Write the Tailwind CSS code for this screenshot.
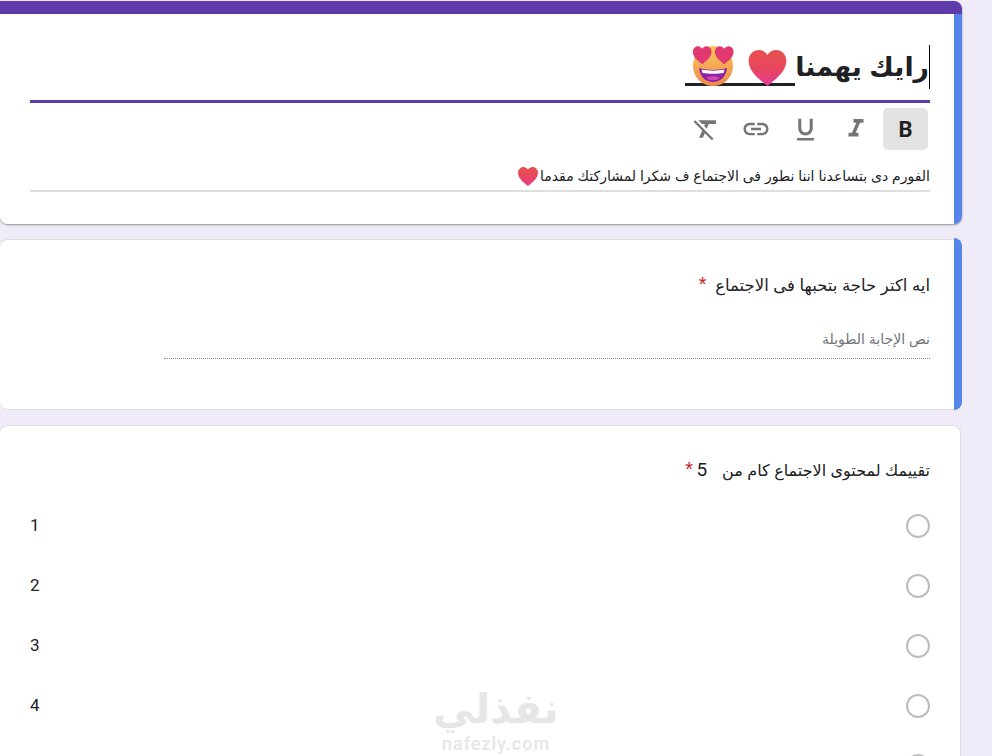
<!DOCTYPE html>
<html lang="ar">

<head>
    <meta charset="UTF-8">
    <meta name="viewport" content="width=device-width, initial-scale=1.0">
    <title>Form</title>
    <script src="https://cdn.jsdelivr.net/npm/@tailwindcss/browser@4"></script>
</head>

<body class="bg-[#f0ebf8] h-[756px] overflow-hidden relative font-['Liberation_Sans','DejaVu_Sans',sans-serif] text-[#202124]">
    <svg class="absolute w-0 h-0">
        <defs>
            <linearGradient id="heartFill" x1="0" y1="0" x2="0" y2="1">
                <stop offset="0" stop-color="#e8504c" />
                <stop offset="0.55" stop-color="#e64560" />
                <stop offset="1" stop-color="#e63c98" />
            </linearGradient>
            <linearGradient id="faceFill" x1="0" y1="0" x2="0" y2="1">
                <stop offset="0" stop-color="#fbc75a" />
                <stop offset="1" stop-color="#ee8a4e" />
            </linearGradient>
            <path id="heartShape" d="M12 22.500C5 17 1 13 1 7.800 1 4.200 3.700 1.500 7 1.500c2 0 3.900 1 5 2.900 1.100-1.900 3-2.900 5-2.900 3.300 0 6 2.700 6 6.300 0 5.200-4 9.200-11 14.700z" />
        </defs>
    </svg>
    <main class="w-[962px] pt-px flex flex-col gap-[14px]">
        <!-- Title card -->
        <section class="h-[223px] flex flex-col rounded-b-lg rounded-tr-lg shadow-[0_1px_2px_rgba(0,0,0,0.4)] overflow-hidden">
            <div class="h-[13px] bg-[#5f3aab] shrink-0"></div>
            <div class="flex flex-1">
                <div class="flex-1 bg-white pl-[30px] pr-6" dir="rtl">
                    <div class="h-[89px] w-[900px] flex items-end border-b-[3px] border-[#5f3aab] pb-[11px]">
                        <div class="h-[44px] border-r border-black flex items-end pb-[3px]">
                            <span class="text-[26.8px] leading-[38px] font-bold text-[#202124] whitespace-nowrap">رايك يهمنا</span>
                            <span class="flex items-end h-[40px] w-[110px] border-b-[3px] border-[#202124]">
                                <svg class="w-[39px] h-[36px] shrink-0 mr-[8px] mb-[-3px]" viewBox="1 1.500 22 21"><use href="#heartShape" fill="url(#heartFill)" /></svg>
                                <svg class="w-[42px] h-[42px] shrink-0 mr-[14px] mb-[-4px]" viewBox="0 0 42 42">
                                    <circle cx="21" cy="21" r="20" fill="url(#faceFill)" />
                                    <path d="M7 23c9 2.500 19 2.500 28 0-1 9-7 14-14 14S8 32 7 23z" fill="#8f1fa3" />
                                    <path d="M9.500 24.500c7 1.500 16 1.500 23 0l-1 3.500c-6 1-15 1-21 0z" fill="#fff" />
                                    <path d="M14 33c4-2.500 10-2.500 14 0-4 3-10 3-14 0z" fill="#d548b4" />
                                    <g transform="translate(0 0) scale(0.85)"><use href="#heartShape" fill="#e0386f" /></g>
                                    <g transform="translate(22 0) scale(0.85)"><use href="#heartShape" fill="#e0386f" /></g>
                                </svg>
                            </span>
                        </div>
                    </div>
                    <div class="flex gap-[5px] h-[42px] mt-[5px] w-[900px] pr-[2px]">
                        <div class="w-[45px] h-[42px] bg-[#e3e3e3] rounded-[5px] flex items-center justify-center font-['Roboto',sans-serif] font-bold text-[22px] text-[#202124]">B</div>
                        <div class="w-[45px] flex items-center justify-center">
                            <svg class="w-[30px] h-[30px] fill-[#757575]" viewBox="0 0 24 24"><path d="M10 4v3h2.210l-3.420 8H6v3h8v-3h-2.210l3.420-8H18V4z" /></svg>
                        </div>
                        <div class="w-[45px] flex items-center justify-center">
                            <svg class="w-[29px] h-[29px] fill-[#757575]" viewBox="0 0 24 24"><path d="M12 17c3.310 0 6-2.690 6-6V3h-2.500v8c0 1.930-1.570 3.500-3.500 3.500S8.500 12.930 8.500 11V3H6v8c0 3.310 2.690 6 6 6zm-7 2v2h14v-2H5z" /></svg>
                        </div>
                        <div class="w-[45px] flex items-center justify-center">
                            <svg class="w-[30px] h-[30px] fill-[#757575]" viewBox="0 0 24 24"><path d="M3.900 12c0-1.710 1.390-3.100 3.100-3.100h4V7H7c-2.760 0-5 2.240-5 5s2.240 5 5 5h4v-1.900H7c-1.710 0-3.100-1.390-3.100-3.100zM8 13h8v-2H8v2zm9-6h-4v1.900h4c1.710 0 3.100 1.390 3.100 3.100s-1.390 3.100-3.100 3.100h-4V17h4c2.760 0 5-2.240 5-5s-2.240-5-5-5z" /></svg>
                        </div>
                        <div class="w-[45px] flex items-center justify-center">
                            <svg class="w-[30px] h-[30px] fill-[#757575]" viewBox="0 0 24 24"><path d="M3.270 5L2 6.270l6.970 6.970L6.500 19h3l1.570-3.660L16.730 21 18 19.730 3.550 5.270 3.270 5zM6 5v.180L8.820 8h2.400l-.720 1.680 2.100 2.100L14.210 8H20V5H6z" /></svg>
                        </div>
                    </div>
                    <div class="w-[900px] h-[30px] mt-[12px] border-b-2 border-[#dedede] flex items-center text-[14px] text-[#202124] whitespace-nowrap">
                        <span>الفورم دى بتساعدنا اننا نطور فى الاجتماع ف شكرا لمشاركتك مقدما</span>
                        <svg class="w-[20px] h-[19px] mr-[2px] shrink-0" viewBox="1 1.500 22 21"><use href="#heartShape" fill="url(#heartFill)" /></svg>
                    </div>
                </div>
                <div class="w-2 bg-[#5584ea]"></div>
            </div>
        </section>
        <!-- Long answer question -->
        <section class="h-[172px] flex">
            <div class="flex-1 bg-white rounded-l-lg border border-x-0 border-[#dadce0] mt-px pr-6 pl-[30px]" dir="rtl">
                <div class="mt-[32px] text-[16.5px] leading-6 whitespace-nowrap">
                    ايه اكتر حاجة بتحبها فى الاجتماع <span class="text-[#c5221f] text-[20px] mr-1">*</span>
                </div>
                <div class="mt-[32px] w-[766px] h-[30px] border-b border-dotted border-[#8a8a8a] text-[14px] leading-5 text-[#70757a]">نص الإجابة الطويلة</div>
            </div>
            <div class="w-2 bg-[#5584ea] rounded-r-lg"></div>
        </section>
        <!-- Scale question -->
        <section class="w-[961px] h-[500px] bg-white rounded-lg border border-l-0 border-[#dadce0] mt-[1px] pl-[30px] pr-[30px]">
            <div class="mt-[31px] text-[16px] leading-6 whitespace-nowrap" dir="rtl">
                تقييمك لمحتوى الاجتماع كام من &nbsp;<span class="mr-[6px] font-['Roboto',sans-serif] text-[19px]">5</span> <span class="text-[#c5221f] text-[20px] mr-[-1px]">*</span>
            </div>
            <div class="mt-[13px] flex flex-col font-['Roboto',sans-serif] text-[17px]">
                <label class="h-[60px] flex items-center justify-between">1<span class="w-6 h-6 rounded-full border-2 border-[#bdbdbd]"></span></label>
                <label class="h-[60px] flex items-center justify-between">2<span class="w-6 h-6 rounded-full border-2 border-[#bdbdbd]"></span></label>
                <label class="h-[60px] flex items-center justify-between">3<span class="w-6 h-6 rounded-full border-2 border-[#bdbdbd]"></span></label>
                <label class="h-[60px] flex items-center justify-between">4<span class="w-6 h-6 rounded-full border-2 border-[#bdbdbd]"></span></label>
                <label class="h-[60px] flex items-center justify-end"><span class="w-6 h-6 rounded-full border-2 border-[#bdbdbd]"></span></label>
            </div>
        </section>
    </main>
    <!-- Watermark -->
    <div class="absolute left-[426px] top-[686px] w-[140px] flex flex-col items-center text-[#e6e6e6] pointer-events-none">
        <span class="text-[41px] leading-[46px] font-bold" dir="rtl">نفذلي</span>
        <span class="font-['Roboto',sans-serif] text-[18px] leading-5 mt-[2px] font-medium tracking-[1px]">nafezly.com</span>
    </div>
</body>

</html>
